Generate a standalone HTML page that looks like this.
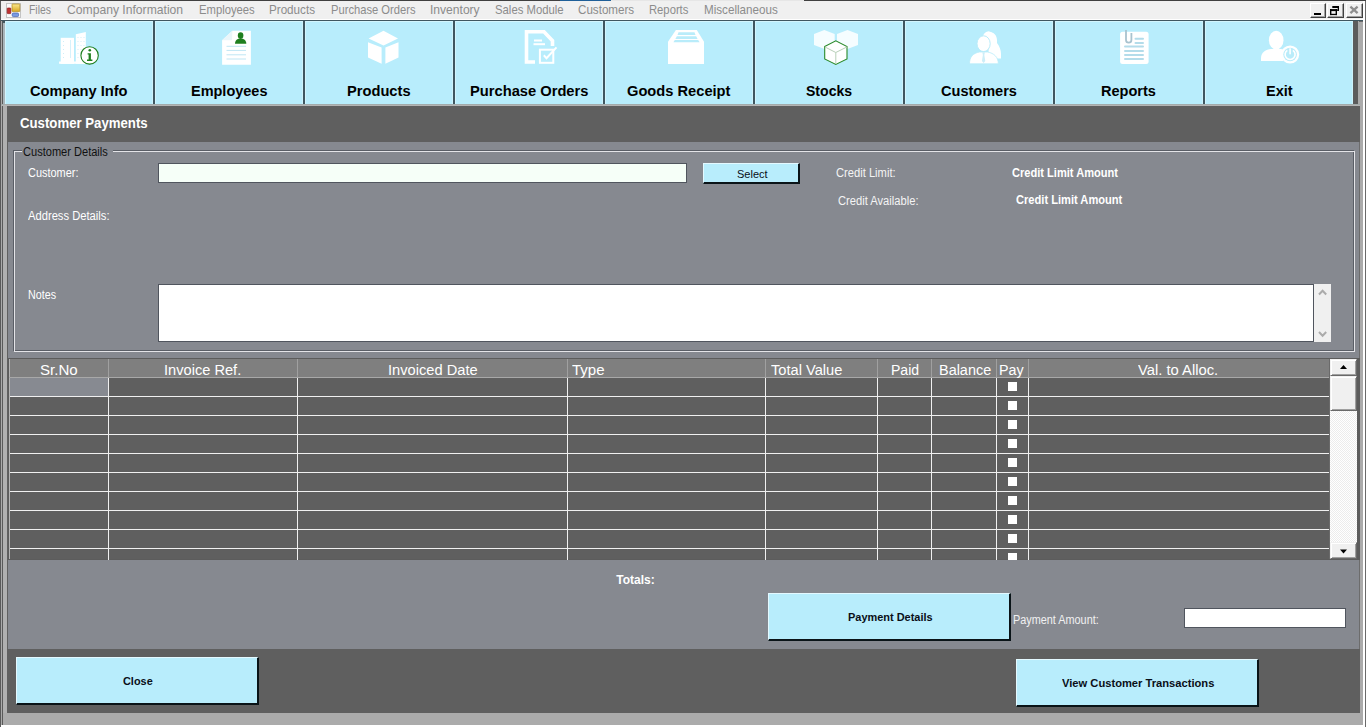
<!DOCTYPE html><html><head><meta charset="utf-8"><title>Customer Payments</title><style>
html,body{margin:0;padding:0;}
body{width:1366px;height:727px;position:relative;overflow:hidden;background:#ababab;font-family:"Liberation Sans", sans-serif;}
div{box-sizing:border-box;}
</style></head><body>
<div style="position:absolute;left:0px;top:725px;width:1366px;height:2px;background:#ffffff"></div>
<div style="position:absolute;left:0px;top:0px;width:1px;height:727px;background:#5a5a5a"></div>
<div style="position:absolute;left:1px;top:21px;width:1px;height:704px;background:#aaaaaa"></div>
<div style="position:absolute;left:2px;top:21px;width:1px;height:704px;background:#5a5a5a"></div>
<div style="position:absolute;left:3px;top:21px;width:4px;height:692px;background:#b0b0b0"></div>
<div style="position:absolute;left:1358px;top:21px;width:2px;height:692px;background:#707070"></div>
<div style="position:absolute;left:1360px;top:21px;width:3px;height:704px;background:#ababab"></div>
<div style="position:absolute;left:1363px;top:21px;width:2px;height:704px;background:#ffffff"></div>
<div style="position:absolute;left:1365px;top:21px;width:1px;height:706px;background:#6a6a6a"></div>
<div style="position:absolute;left:0px;top:0px;width:1366px;height:1px;background:#404040"></div>
<div style="position:absolute;left:560px;top:0px;width:51px;height:1px;background:#1f5f98"></div>
<div style="position:absolute;left:560px;top:1px;width:51px;height:1px;background:#d8fbff"></div>
<div style="position:absolute;left:611px;top:0px;width:193px;height:1px;background:#e6e6e6"></div>
<div style="position:absolute;left:1px;top:1px;width:1365px;height:18px;background:#f0f0f0"></div>
<div style="position:absolute;left:1px;top:19px;width:1365px;height:1px;background:#ffffff"></div>
<div style="position:absolute;left:1px;top:20px;width:1365px;height:1px;background:#3f5660"></div>
<svg style="position:absolute;left:6px;top:3px" width="15" height="15" viewBox="0 0 15 15"><defs><linearGradient id="gy" x1="0" y1="0" x2="0" y2="1"><stop offset="0" stop-color="#fbe890"/><stop offset="1" stop-color="#d8a820"/></linearGradient></defs><rect x="0.5" y="0.5" width="14" height="14" fill="#fafafa" stroke="#c4c4c4" stroke-width="1"/><rect x="1.2" y="5" width="3.6" height="5.6" rx="0.6" fill="#c03030" stroke="#8a1818" stroke-width="0.7"/><rect x="6" y="1" width="7.8" height="7.6" rx="0.5" fill="url(#gy)" stroke="#b08818" stroke-width="0.7"/><rect x="6.2" y="10" width="6.4" height="3.6" rx="1.2" fill="#7a9ae0" stroke="#3f5fb0" stroke-width="0.7"/></svg>
<div style="position:absolute;left:29.30px;top:4.20px;font-size:12.4px;line-height:12.4px;color:#8c8c8c;font-weight:normal;white-space:nowrap;transform:scaleX(0.8365);transform-origin:0 0;">Files</div>
<div style="position:absolute;left:66.80px;top:4.20px;font-size:12.4px;line-height:12.4px;color:#8c8c8c;font-weight:normal;white-space:nowrap;transform:scaleX(0.9802);transform-origin:0 0;">Company Information</div>
<div style="position:absolute;left:198.50px;top:4.20px;font-size:12.4px;line-height:12.4px;color:#8c8c8c;font-weight:normal;white-space:nowrap;transform:scaleX(0.9080);transform-origin:0 0;">Employees</div>
<div style="position:absolute;left:269.40px;top:4.20px;font-size:12.4px;line-height:12.4px;color:#8c8c8c;font-weight:normal;white-space:nowrap;transform:scaleX(0.9400);transform-origin:0 0;">Products</div>
<div style="position:absolute;left:330.50px;top:4.20px;font-size:12.4px;line-height:12.4px;color:#8c8c8c;font-weight:normal;white-space:nowrap;transform:scaleX(0.9026);transform-origin:0 0;">Purchase Orders</div>
<div style="position:absolute;left:430.40px;top:4.20px;font-size:12.4px;line-height:12.4px;color:#8c8c8c;font-weight:normal;white-space:nowrap;transform:scaleX(0.9744);transform-origin:0 0;">Inventory</div>
<div style="position:absolute;left:494.50px;top:4.20px;font-size:12.4px;line-height:12.4px;color:#8c8c8c;font-weight:normal;white-space:nowrap;transform:scaleX(0.9144);transform-origin:0 0;">Sales Module</div>
<div style="position:absolute;left:578.40px;top:4.20px;font-size:12.4px;line-height:12.4px;color:#8c8c8c;font-weight:normal;white-space:nowrap;transform:scaleX(0.9375);transform-origin:0 0;">Customers</div>
<div style="position:absolute;left:649.10px;top:4.20px;font-size:12.4px;line-height:12.4px;color:#8c8c8c;font-weight:normal;white-space:nowrap;transform:scaleX(0.9074);transform-origin:0 0;">Reports</div>
<div style="position:absolute;left:703.70px;top:4.20px;font-size:12.4px;line-height:12.4px;color:#8c8c8c;font-weight:normal;white-space:nowrap;transform:scaleX(0.9392);transform-origin:0 0;">Miscellaneous</div>
<div style="position:absolute;left:1310px;top:3px;width:16px;height:15px;background:#f0f0f0;border-top:1px solid #ffffff;border-left:1px solid #ffffff;border-right:1px solid #404040;border-bottom:1px solid #404040;box-shadow:inset -1px -1px 0 #a0a0a0"></div>
<div style="position:absolute;left:1327px;top:3px;width:17px;height:15px;background:#f0f0f0;border-top:1px solid #ffffff;border-left:1px solid #ffffff;border-right:1px solid #404040;border-bottom:1px solid #404040;box-shadow:inset -1px -1px 0 #a0a0a0"></div>
<div style="position:absolute;left:1346px;top:3px;width:17px;height:15px;background:#f0f0f0;border-top:1px solid #ffffff;border-left:1px solid #ffffff;border-right:1px solid #404040;border-bottom:1px solid #404040;box-shadow:inset -1px -1px 0 #a0a0a0"></div>
<div style="position:absolute;left:1314px;top:13px;width:7px;height:2px;background:#000"></div>
<svg style="position:absolute;left:1327px;top:3px" width="17" height="15" viewBox="0 0 17 15"><rect x="5.3" y="3" width="6.7" height="2" fill="#000"/><rect x="10.7" y="3" width="1.3" height="4.8" fill="#000"/><rect x="10" y="6.5" width="2" height="1.3" fill="#000"/><rect x="3" y="6.1" width="7" height="2" fill="#000"/><rect x="3" y="6.1" width="1.4" height="6" fill="#000"/><rect x="8.6" y="6.1" width="1.4" height="6" fill="#000"/><rect x="3" y="10.8" width="7" height="1.3" fill="#000"/></svg>
<svg style="position:absolute;left:1346px;top:3px" width="17" height="15" viewBox="0 0 17 15"><path d="M4.4 3.6 L11.6 10.2 M11.6 3.6 L4.4 10.2" stroke="#8e8e8e" stroke-width="2.3"/></svg>
<div style="position:absolute;left:1363px;top:1px;width:2px;height:20px;background:#ffffff"></div>
<div style="position:absolute;left:1365px;top:1px;width:1px;height:20px;background:#6a6a6a"></div>
<div style="position:absolute;left:3px;top:21px;width:1350px;height:83px;background:#3f5660"></div>
<div style="position:absolute;left:3px;top:22px;width:2px;height:82px;background:#a9b5ba"></div>
<div style="position:absolute;left:2px;top:22px;width:3px;height:1px;background:#4a5a60"></div>
<div style="position:absolute;left:5px;top:21px;width:148px;height:83px;background:#b8edfc;box-shadow:inset 1px 1px 0 #d2f5fd, inset -1px 0 0 #cdf2fb"></div>
<div style="position:absolute;left:30.10px;top:82.76px;font-size:15.4px;line-height:15.4px;color:#000;font-weight:bold;white-space:nowrap;transform:scaleX(0.9506);transform-origin:0 0;">Company Info</div>
<div style="position:absolute;left:155px;top:21px;width:148px;height:83px;background:#b8edfc;box-shadow:inset 1px 1px 0 #d2f5fd, inset -1px 0 0 #cdf2fb"></div>
<div style="position:absolute;left:190.65px;top:82.76px;font-size:15.4px;line-height:15.4px;color:#000;font-weight:bold;white-space:nowrap;transform:scaleX(0.9407);transform-origin:0 0;">Employees</div>
<div style="position:absolute;left:305px;top:21px;width:148px;height:83px;background:#b8edfc;box-shadow:inset 1px 1px 0 #d2f5fd, inset -1px 0 0 #cdf2fb"></div>
<div style="position:absolute;left:347.10px;top:82.76px;font-size:15.4px;line-height:15.4px;color:#000;font-weight:bold;white-space:nowrap;transform:scaleX(0.9529);transform-origin:0 0;">Products</div>
<div style="position:absolute;left:455px;top:21px;width:148px;height:83px;background:#b8edfc;box-shadow:inset 1px 1px 0 #d2f5fd, inset -1px 0 0 #cdf2fb"></div>
<div style="position:absolute;left:469.65px;top:82.76px;font-size:15.4px;line-height:15.4px;color:#000;font-weight:bold;white-space:nowrap;transform:scaleX(0.9547);transform-origin:0 0;">Purchase Orders</div>
<div style="position:absolute;left:605px;top:21px;width:148px;height:83px;background:#b8edfc;box-shadow:inset 1px 1px 0 #d2f5fd, inset -1px 0 0 #cdf2fb"></div>
<div style="position:absolute;left:627.15px;top:82.76px;font-size:15.4px;line-height:15.4px;color:#000;font-weight:bold;white-space:nowrap;transform:scaleX(0.9524);transform-origin:0 0;">Goods Receipt</div>
<div style="position:absolute;left:755px;top:21px;width:148px;height:83px;background:#b8edfc;box-shadow:inset 1px 1px 0 #d2f5fd, inset -1px 0 0 #cdf2fb"></div>
<div style="position:absolute;left:805.85px;top:82.76px;font-size:15.4px;line-height:15.4px;color:#000;font-weight:bold;white-space:nowrap;transform:scaleX(0.9128);transform-origin:0 0;">Stocks</div>
<div style="position:absolute;left:905px;top:21px;width:148px;height:83px;background:#b8edfc;box-shadow:inset 1px 1px 0 #d2f5fd, inset -1px 0 0 #cdf2fb"></div>
<div style="position:absolute;left:940.90px;top:82.76px;font-size:15.4px;line-height:15.4px;color:#000;font-weight:bold;white-space:nowrap;transform:scaleX(0.9447);transform-origin:0 0;">Customers</div>
<div style="position:absolute;left:1055px;top:21px;width:148px;height:83px;background:#b8edfc;box-shadow:inset 1px 1px 0 #d2f5fd, inset -1px 0 0 #cdf2fb"></div>
<div style="position:absolute;left:1101.40px;top:82.76px;font-size:15.4px;line-height:15.4px;color:#000;font-weight:bold;white-space:nowrap;transform:scaleX(0.9452);transform-origin:0 0;">Reports</div>
<div style="position:absolute;left:1205px;top:21px;width:148px;height:83px;background:#b8edfc;box-shadow:inset 1px 1px 0 #d2f5fd, inset -1px 0 0 #cdf2fb"></div>
<div style="position:absolute;left:1265.60px;top:82.76px;font-size:15.4px;line-height:15.4px;color:#000;font-weight:bold;white-space:nowrap;transform:scaleX(0.9418);transform-origin:0 0;">Exit</div>
<div style="position:absolute;left:1353px;top:21px;width:5px;height:83px;background:#5c5c5c"></div>
<div style="position:absolute;left:1358px;top:21px;width:5px;height:83px;background:#ababab"></div>
<div style="position:absolute;left:1359px;top:21px;width:4px;height:1px;background:#6a6a6a"></div>
<div style="position:absolute;left:1px;top:104px;width:1359px;height:1px;background:#a3abab"></div>
<div style="position:absolute;left:1px;top:105px;width:1359px;height:1px;background:#b4b4b4"></div>
<svg style="position:absolute;left:0;top:0" width="1366" height="110" viewBox="0 0 1366 110"><rect x="60.7" y="37.8" width="13.3" height="26" fill="#ffffff"/><polygon points="75.8,34.2 85.8,32 85.8,63.8 75.8,63.8" fill="#ffffff"/><rect x="59.1" y="61.5" width="29" height="2.3" fill="#ffffff"/><rect x="70" y="40" width="1" height="18" fill="#d6f2fb"/><rect x="63" y="41" width="1" height="1" fill="#d0eef8"/><rect x="63" y="45" width="1" height="1" fill="#d0eef8"/><rect x="63" y="49" width="1" height="1" fill="#d0eef8"/><rect x="63" y="53" width="1" height="1" fill="#d0eef8"/><rect x="63" y="57" width="1" height="1" fill="#d0eef8"/><rect x="77.5" y="37" width="1" height="1" fill="#d0eef8"/><rect x="80.5" y="37" width="1" height="1" fill="#d0eef8"/><rect x="83.5" y="37" width="1" height="1" fill="#d0eef8"/><rect x="77.5" y="41" width="1" height="1" fill="#d0eef8"/><rect x="80.5" y="41" width="1" height="1" fill="#d0eef8"/><rect x="83.5" y="41" width="1" height="1" fill="#d0eef8"/><rect x="77.5" y="45" width="1" height="1" fill="#d0eef8"/><rect x="80.5" y="45" width="1" height="1" fill="#d0eef8"/><rect x="83.5" y="45" width="1" height="1" fill="#d0eef8"/><rect x="77.5" y="49" width="1" height="1" fill="#d0eef8"/><rect x="80.5" y="49" width="1" height="1" fill="#d0eef8"/><rect x="83.5" y="49" width="1" height="1" fill="#d0eef8"/><rect x="77.5" y="53" width="1" height="1" fill="#d0eef8"/><rect x="80.5" y="53" width="1" height="1" fill="#d0eef8"/><rect x="83.5" y="53" width="1" height="1" fill="#d0eef8"/><rect x="77.5" y="57" width="1" height="1" fill="#d0eef8"/><rect x="80.5" y="57" width="1" height="1" fill="#d0eef8"/><rect x="83.5" y="57" width="1" height="1" fill="#d0eef8"/><circle cx="89.6" cy="55.4" r="8.7" fill="#ffffff" stroke="#1f7f1f" stroke-width="1.1"/><circle cx="89.8" cy="50.3" r="1.3" fill="#1f7f1f"/><path d="M87.6 53.2 H90.9 V59.6 H92.4 V61 H87 V59.6 H88.6 V54.4 H87.6 Z" fill="#1f7f1f"/><path d="M232.4 30.8 H250.9 V64.7 H222.1 V40.2 Z" fill="#ffffff"/><path d="M222.1 40.2 L232.4 30.8 L232 40.2 Z" fill="#eaf6fa"/><ellipse cx="240.6" cy="35.6" rx="2.8" ry="3.3" fill="#1f7f1f"/><path d="M235 43.8 C235 40.5 237.5 38.6 240.6 38.6 C243.7 38.6 246.3 40.5 246.3 43.8 Z" fill="#1f7f1f"/><rect x="226.5" y="45.8" width="19.5" height="1" fill="#bfe6f4"/><rect x="226.5" y="49.9" width="19.5" height="1" fill="#bfe6f4"/><rect x="226.5" y="54.3" width="19.5" height="1" fill="#bfe6f4"/><rect x="226.5" y="58.5" width="19.5" height="1" fill="#bfe6f4"/><polygon points="383.5,30.8 398,38.4 383.5,45.4 368.6,38.4" fill="#ffffff"/><polygon points="368,42.3 381.6,47.5 381.6,63.8 368,57.5" fill="#ffffff"/><polygon points="398.5,42.3 385.4,47.5 385.4,63.8 398.5,57.5" fill="#ffffff"/><path d="M526.5 31.7 H544 L552.5 40.8 V46" fill="none" stroke="#ffffff" stroke-width="3.6"/><path d="M526.5 30 V62 H535" fill="none" stroke="#ffffff" stroke-width="3.6"/><rect x="534" y="39.5" width="8" height="2" fill="#ffffff"/><rect x="533.5" y="43.2" width="11.5" height="2" fill="#ffffff"/><rect x="539.9" y="49.7" width="13.4" height="13.1" fill="none" stroke="#ffffff" stroke-width="2"/><path d="M543.8 55.3 L546.5 58.2 L556.5 47.4" fill="none" stroke="#ffffff" stroke-width="2"/><polygon points="675.9,30 696.8,30 704,41.7 704,64.1 668,64.1 668,41.7" fill="#ffffff"/><polygon points="678.5,32.2 694.5,32.2 695.5,35 677.5,35" fill="#b9ecfa"/><polygon points="676.8,36.2 696.2,36.2 697.6,39 675.4,39" fill="#b9ecfa"/><polygon points="674.8,40 698.2,40 699.6,42.3 673.4,42.3" fill="#b9ecfa"/><polygon points="814,34 824.3,30 834.7,34 834.7,45 824.5,49 814,45" fill="#ffffff" fill-opacity="0.85"/><polygon points="837,34 847.5,30 858,34 858,45 847.5,49 837,45" fill="#ffffff" fill-opacity="0.85"/><polygon points="824.7,46.5 835.8,40.8 847,46.5 847,59 835.8,64.4 824.7,59" fill="#ffffff" stroke="#2a8a2a" stroke-width="1.1"/><path d="M825 47 L835.8 52.5 L846.8 47 M835.8 52.5 V64" fill="none" stroke="#b8d0b8" stroke-width="1"/><ellipse cx="988.5" cy="39.8" rx="6.3" ry="8.6" fill="#ffffff"/><path d="M990 32 C996 32.5 997.5 38 997 43 C999.5 46 1001 50 1001 54 L1001 58.5 L988 58.5 Z" fill="#ffffff"/><ellipse cx="983.6" cy="43.7" rx="6.6" ry="7.9" fill="#ffffff" stroke="#b9ecfa" stroke-width="1"/><path d="M969.5 63.8 C969.5 57 973 53.2 979.5 52 L987.5 52 C994 53.2 998.3 57 998.3 63.8 Z" fill="#ffffff" stroke="#b9ecfa" stroke-width="0.8"/><path d="M982.3 52.3 L984.9 52.3 L984.3 55 L985.3 61 L983.6 63 L981.9 61 L982.9 55 Z" fill="#cdeef8"/><rect x="1120.1" y="31.8" width="28.5" height="32.3" rx="2.5" fill="#ffffff"/><path d="M1126 30 V40 A2.7 2.7 0 0 0 1131.4 40 V33" fill="none" stroke="#a9c3cf" stroke-width="1.8"/><rect x="1134.5" y="37.7" width="9.5" height="2" rx="1" fill="#b3dcea"/><rect x="1134.5" y="41.9" width="9.5" height="2" rx="1" fill="#b3dcea"/><rect x="1124" y="45.4" width="20" height="2" rx="1" fill="#b3dcea"/><rect x="1124" y="49.9" width="20" height="2" rx="1" fill="#b3dcea"/><rect x="1124" y="53.9" width="20" height="2" rx="1" fill="#b3dcea"/><rect x="1124" y="58.1" width="20" height="2" rx="1" fill="#b3dcea"/><ellipse cx="1276.2" cy="40.2" rx="7.3" ry="9.4" fill="#ffffff"/><path d="M1261 61.1 V58 C1261 52 1266 49.5 1271 49 L1281 49 C1284 49.5 1286 51 1287 53 L1283 61.1 Z" fill="#ffffff"/><circle cx="1290.1" cy="54.5" r="9.1" fill="#ffffff"/><circle cx="1290.1" cy="54.5" r="6.8" fill="#b9ecfa"/><path d="M1287.3 50.3 A5 5 0 1 0 1292.9 50.3" fill="none" stroke="#ffffff" stroke-width="1.6"/><rect x="1289.3" y="48.3" width="1.6" height="6" fill="#ffffff"/></svg>
<div style="position:absolute;left:7px;top:106px;width:1353px;height:36px;background:#5f5f5f"></div>
<div style="position:absolute;left:20.40px;top:116.82px;font-size:13.8px;line-height:13.8px;color:#ffffff;font-weight:bold;white-space:nowrap;transform:scaleX(0.9569);transform-origin:0 0;">Customer Payments</div>
<div style="position:absolute;left:7px;top:142px;width:1353px;height:507px;background:#868990"></div>
<div style="position:absolute;left:7px;top:142px;width:1px;height:507px;background:#606060"></div>
<div style="position:absolute;left:1359px;top:142px;width:1px;height:507px;background:#6c6c6c"></div>
<div style="position:absolute;left:13px;top:150px;width:1341px;height:201px;border:1px solid #5a5e66"></div>
<div style="position:absolute;left:14px;top:151px;width:1341px;height:201px;border:1px solid #e4e4e8"></div>
<div style="position:absolute;left:22px;top:145px;width:91px;height:12px;background:#868990"></div>
<div style="position:absolute;left:23.40px;top:145.74px;font-size:12px;line-height:12px;color:#111111;font-weight:normal;white-space:nowrap;transform:scaleX(0.9214);transform-origin:0 0;">Customer Details</div>
<div style="position:absolute;left:28.20px;top:166.94px;font-size:12px;line-height:12px;color:#ffffff;font-weight:normal;white-space:nowrap;transform:scaleX(0.9124);transform-origin:0 0;">Customer:</div>
<div style="position:absolute;left:28.20px;top:209.94px;font-size:12px;line-height:12px;color:#ffffff;font-weight:normal;white-space:nowrap;transform:scaleX(0.9328);transform-origin:0 0;">Address Details:</div>
<div style="position:absolute;left:28.20px;top:288.84px;font-size:12px;line-height:12px;color:#ffffff;font-weight:normal;white-space:nowrap;transform:scaleX(0.8932);transform-origin:0 0;">Notes</div>
<div style="position:absolute;left:158px;top:163px;width:529px;height:20px;background:#f6fff8;border:1px solid #50555e"></div>
<div style="position:absolute;left:703px;top:163px;width:97px;height:21px;background:#b8edfc;border-top:1px solid #e4f9ff;border-left:1px solid #e4f9ff;border-right:2px solid #0a1418;border-bottom:2px solid #0a1418"></div>
<div style="position:absolute;left:452.30px;top:169.39px;width:600px;text-align:center;font-size:11px;line-height:11px;color:#0a0f18;font-weight:normal;white-space:nowrap;">Select</div>
<div style="position:absolute;left:836.30px;top:167.04px;font-size:12px;line-height:12px;color:#f4f4f4;font-weight:normal;white-space:nowrap;transform:scaleX(0.9310);transform-origin:0 0;">Credit Limit:</div>
<div style="position:absolute;left:1012.30px;top:167.04px;font-size:12px;line-height:12px;color:#ffffff;font-weight:bold;white-space:nowrap;transform:scaleX(0.9227);transform-origin:0 0;">Credit Limit Amount</div>
<div style="position:absolute;left:837.60px;top:194.94px;font-size:12px;line-height:12px;color:#f4f4f4;font-weight:normal;white-space:nowrap;transform:scaleX(0.9306);transform-origin:0 0;">Credit Available:</div>
<div style="position:absolute;left:1015.90px;top:193.94px;font-size:12px;line-height:12px;color:#ffffff;font-weight:bold;white-space:nowrap;transform:scaleX(0.9253);transform-origin:0 0;">Credit Limit Amount</div>
<div style="position:absolute;left:158px;top:284px;width:1156px;height:58px;background:#ffffff;border:1px solid #50555e"></div>
<div style="position:absolute;left:1314px;top:284px;width:17px;height:58px;background:#f0f0f0"></div>
<svg style="position:absolute;left:1314px;top:284px" width="17" height="58" viewBox="0 0 17 58"><path d="M5 10.5 L8.6 6.8 L12.2 10.5" fill="none" stroke="#ababab" stroke-width="2"/><path d="M5 48 L8.6 51.7 L12.2 48" fill="none" stroke="#ababab" stroke-width="2"/></svg>
<div style="position:absolute;left:8px;top:358px;width:1352px;height:202px;overflow:hidden;background:#5c5c5c">
<div style="position:absolute;left:1px;top:1px;width:1320px;height:200px;background:#5f5f5f"></div>
<div style="position:absolute;left:1px;top:1px;width:1320px;height:18px;background:#7f7f7f"></div>
<div style="position:absolute;left:1px;top:1px;width:1px;height:200px;background:#b4b4b4"></div>
<div style="position:absolute;left:1px;top:19px;width:1320px;height:1px;background:#a8a8a8"></div>
<div style="position:absolute;left:100px;top:1px;width:1px;height:18px;background:#a0a0a0"></div>
<div style="position:absolute;left:289px;top:1px;width:1px;height:18px;background:#a0a0a0"></div>
<div style="position:absolute;left:559px;top:1px;width:1px;height:18px;background:#a0a0a0"></div>
<div style="position:absolute;left:757px;top:1px;width:1px;height:18px;background:#a0a0a0"></div>
<div style="position:absolute;left:869px;top:1px;width:1px;height:18px;background:#a0a0a0"></div>
<div style="position:absolute;left:923px;top:1px;width:1px;height:18px;background:#a0a0a0"></div>
<div style="position:absolute;left:988px;top:1px;width:1px;height:18px;background:#a0a0a0"></div>
<div style="position:absolute;left:1020px;top:1px;width:1px;height:18px;background:#a0a0a0"></div>
<div style="position:absolute;left:32.30px;top:4.13px;font-size:15.2px;line-height:15.2px;color:#ffffff;font-weight:normal;white-space:nowrap;transform:scaleX(0.9917);transform-origin:0 0;">Sr.No</div>
<div style="position:absolute;left:155.90px;top:4.13px;font-size:15.2px;line-height:15.2px;color:#ffffff;font-weight:normal;white-space:nowrap;transform:scaleX(0.9631);transform-origin:0 0;">Invoice Ref.</div>
<div style="position:absolute;left:379.90px;top:4.13px;font-size:15.2px;line-height:15.2px;color:#ffffff;font-weight:normal;white-space:nowrap;transform:scaleX(0.9651);transform-origin:0 0;">Invoiced Date</div>
<div style="position:absolute;left:563.60px;top:4.13px;font-size:15.2px;line-height:15.2px;color:#ffffff;font-weight:normal;white-space:nowrap;transform:scaleX(0.9892);transform-origin:0 0;">Type</div>
<div style="position:absolute;left:762.60px;top:4.13px;font-size:15.2px;line-height:15.2px;color:#ffffff;font-weight:normal;white-space:nowrap;transform:scaleX(0.9638);transform-origin:0 0;">Total Value</div>
<div style="position:absolute;left:882.50px;top:4.13px;font-size:15.2px;line-height:15.2px;color:#ffffff;font-weight:normal;white-space:nowrap;transform:scaleX(0.9236);transform-origin:0 0;">Paid</div>
<div style="position:absolute;left:930.50px;top:4.13px;font-size:15.2px;line-height:15.2px;color:#ffffff;font-weight:normal;white-space:nowrap;transform:scaleX(0.9503);transform-origin:0 0;">Balance</div>
<div style="position:absolute;left:991.40px;top:4.13px;font-size:15.2px;line-height:15.2px;color:#ffffff;font-weight:normal;white-space:nowrap;transform:scaleX(0.9392);transform-origin:0 0;">Pay</div>
<div style="position:absolute;left:1130.30px;top:4.13px;font-size:15.2px;line-height:15.2px;color:#ffffff;font-weight:normal;white-space:nowrap;transform:scaleX(0.9731);transform-origin:0 0;">Val. to Alloc.</div>
<div style="position:absolute;left:2px;top:38px;width:1319px;height:1px;background:#f0f0f0"></div>
<div style="position:absolute;left:2px;top:57px;width:1319px;height:1px;background:#f0f0f0"></div>
<div style="position:absolute;left:2px;top:76px;width:1319px;height:1px;background:#f0f0f0"></div>
<div style="position:absolute;left:2px;top:95px;width:1319px;height:1px;background:#f0f0f0"></div>
<div style="position:absolute;left:2px;top:114px;width:1319px;height:1px;background:#f0f0f0"></div>
<div style="position:absolute;left:2px;top:133px;width:1319px;height:1px;background:#f0f0f0"></div>
<div style="position:absolute;left:2px;top:152px;width:1319px;height:1px;background:#f0f0f0"></div>
<div style="position:absolute;left:2px;top:171px;width:1319px;height:1px;background:#f0f0f0"></div>
<div style="position:absolute;left:2px;top:190px;width:1319px;height:1px;background:#f0f0f0"></div>
<div style="position:absolute;left:100px;top:20px;width:1px;height:182px;background:#f0f0f0"></div>
<div style="position:absolute;left:289px;top:20px;width:1px;height:182px;background:#f0f0f0"></div>
<div style="position:absolute;left:559px;top:20px;width:1px;height:182px;background:#f0f0f0"></div>
<div style="position:absolute;left:757px;top:20px;width:1px;height:182px;background:#f0f0f0"></div>
<div style="position:absolute;left:869px;top:20px;width:1px;height:182px;background:#f0f0f0"></div>
<div style="position:absolute;left:923px;top:20px;width:1px;height:182px;background:#f0f0f0"></div>
<div style="position:absolute;left:988px;top:20px;width:1px;height:182px;background:#f0f0f0"></div>
<div style="position:absolute;left:1020px;top:20px;width:1px;height:182px;background:#f0f0f0"></div>
<div style="position:absolute;left:2px;top:20px;width:98px;height:18px;background:#878a91"></div>
<div style="position:absolute;left:1000px;top:24px;width:9px;height:9px;background:#ffffff"></div>
<div style="position:absolute;left:1000px;top:43px;width:9px;height:9px;background:#ffffff"></div>
<div style="position:absolute;left:1000px;top:62px;width:9px;height:9px;background:#ffffff"></div>
<div style="position:absolute;left:1000px;top:81px;width:9px;height:9px;background:#ffffff"></div>
<div style="position:absolute;left:1000px;top:100px;width:9px;height:9px;background:#ffffff"></div>
<div style="position:absolute;left:1000px;top:119px;width:9px;height:9px;background:#ffffff"></div>
<div style="position:absolute;left:1000px;top:138px;width:9px;height:9px;background:#ffffff"></div>
<div style="position:absolute;left:1000px;top:157px;width:9px;height:9px;background:#ffffff"></div>
<div style="position:absolute;left:1000px;top:176px;width:9px;height:9px;background:#ffffff"></div>
<div style="position:absolute;left:1000px;top:195px;width:9px;height:9px;background:#ffffff"></div>
<div style="position:absolute;left:1321px;top:1px;width:1px;height:200px;background:#6a6a6a"></div>
<div style="position:absolute;left:1322px;top:1px;width:27px;height:200px;background:#f4f4f4;background-image:repeating-conic-gradient(#ececec 0 25%, #ffffff 0 50%);background-size:2px 2px"></div>
<div style="position:absolute;left:1322px;top:1px;width:27px;height:17px;background:#f0f0f0;border-top:1px solid #f0f0f0;border-left:1px solid #f0f0f0;border-right:1px solid #696969;border-bottom:1px solid #696969;box-shadow:inset 1px 1px 0 #ffffff, inset -1px -1px 0 #a0a0a0"></div>
<div style="position:absolute;left:1322px;top:18px;width:27px;height:35px;background:#f0f0f0;border-top:1px solid #f0f0f0;border-left:1px solid #f0f0f0;border-right:1px solid #696969;border-bottom:1px solid #696969;box-shadow:inset 1px 1px 0 #ffffff, inset -1px -1px 0 #a0a0a0"></div>
<div style="position:absolute;left:1322px;top:184px;width:27px;height:17px;background:#f0f0f0;border-top:1px solid #f0f0f0;border-left:1px solid #f0f0f0;border-right:1px solid #696969;border-bottom:1px solid #696969;box-shadow:inset 1px 1px 0 #ffffff, inset -1px -1px 0 #a0a0a0"></div>
<svg style="position:absolute;left:1322px;top:1px" width="27" height="17"><path d="M10 10 L13.5 6 L17 10 Z" fill="#000"/></svg>
<svg style="position:absolute;left:1322px;top:184px" width="27" height="17"><path d="M10 7.5 L13.5 11.5 L17 7.5 Z" fill="#000"/></svg>
</div>
<div style="position:absolute;left:616.20px;top:573.84px;font-size:12px;line-height:12px;color:#ffffff;font-weight:bold;white-space:nowrap;">Totals:</div>
<div style="position:absolute;left:768px;top:593px;width:243px;height:48px;background:#b8edfc;border-top:1px solid #e4f9ff;border-left:1px solid #e4f9ff;border-right:2px solid #0a1418;border-bottom:2px solid #0a1418"></div>
<div style="position:absolute;left:848.00px;top:611.63px;font-size:11.3px;line-height:11.3px;color:#0a0f18;font-weight:bold;white-space:nowrap;transform:scaleX(0.9691);transform-origin:0 0;">Payment Details</div>
<div style="position:absolute;left:1013.30px;top:613.84px;font-size:12px;line-height:12px;color:#f0f0f0;font-weight:normal;white-space:nowrap;transform:scaleX(0.9048);transform-origin:0 0;">Payment Amount:</div>
<div style="position:absolute;left:1184px;top:608px;width:162px;height:20px;background:#ffffff;border:1px solid #50555e"></div>
<div style="position:absolute;left:7px;top:649px;width:1353px;height:64px;background:#5f5f5f"></div>
<div style="position:absolute;left:16px;top:657px;width:243px;height:48px;background:#b8edfc;border-top:1px solid #e4f9ff;border-left:1px solid #e4f9ff;border-right:2px solid #0a1418;border-bottom:2px solid #0a1418"></div>
<div style="position:absolute;left:123.45px;top:675.93px;font-size:11.3px;line-height:11.3px;color:#0a0f18;font-weight:bold;white-space:nowrap;transform:scaleX(0.9651);transform-origin:0 0;">Close</div>
<div style="position:absolute;left:1016px;top:659px;width:243px;height:48px;background:#b8edfc;border-top:1px solid #e4f9ff;border-left:1px solid #e4f9ff;border-right:2px solid #0a1418;border-bottom:2px solid #0a1418"></div>
<div style="position:absolute;left:1062.10px;top:677.83px;font-size:11.3px;line-height:11.3px;color:#0a0f18;font-weight:bold;white-space:nowrap;transform:scaleX(0.9878);transform-origin:0 0;">View Customer Transactions</div>
</body></html>
